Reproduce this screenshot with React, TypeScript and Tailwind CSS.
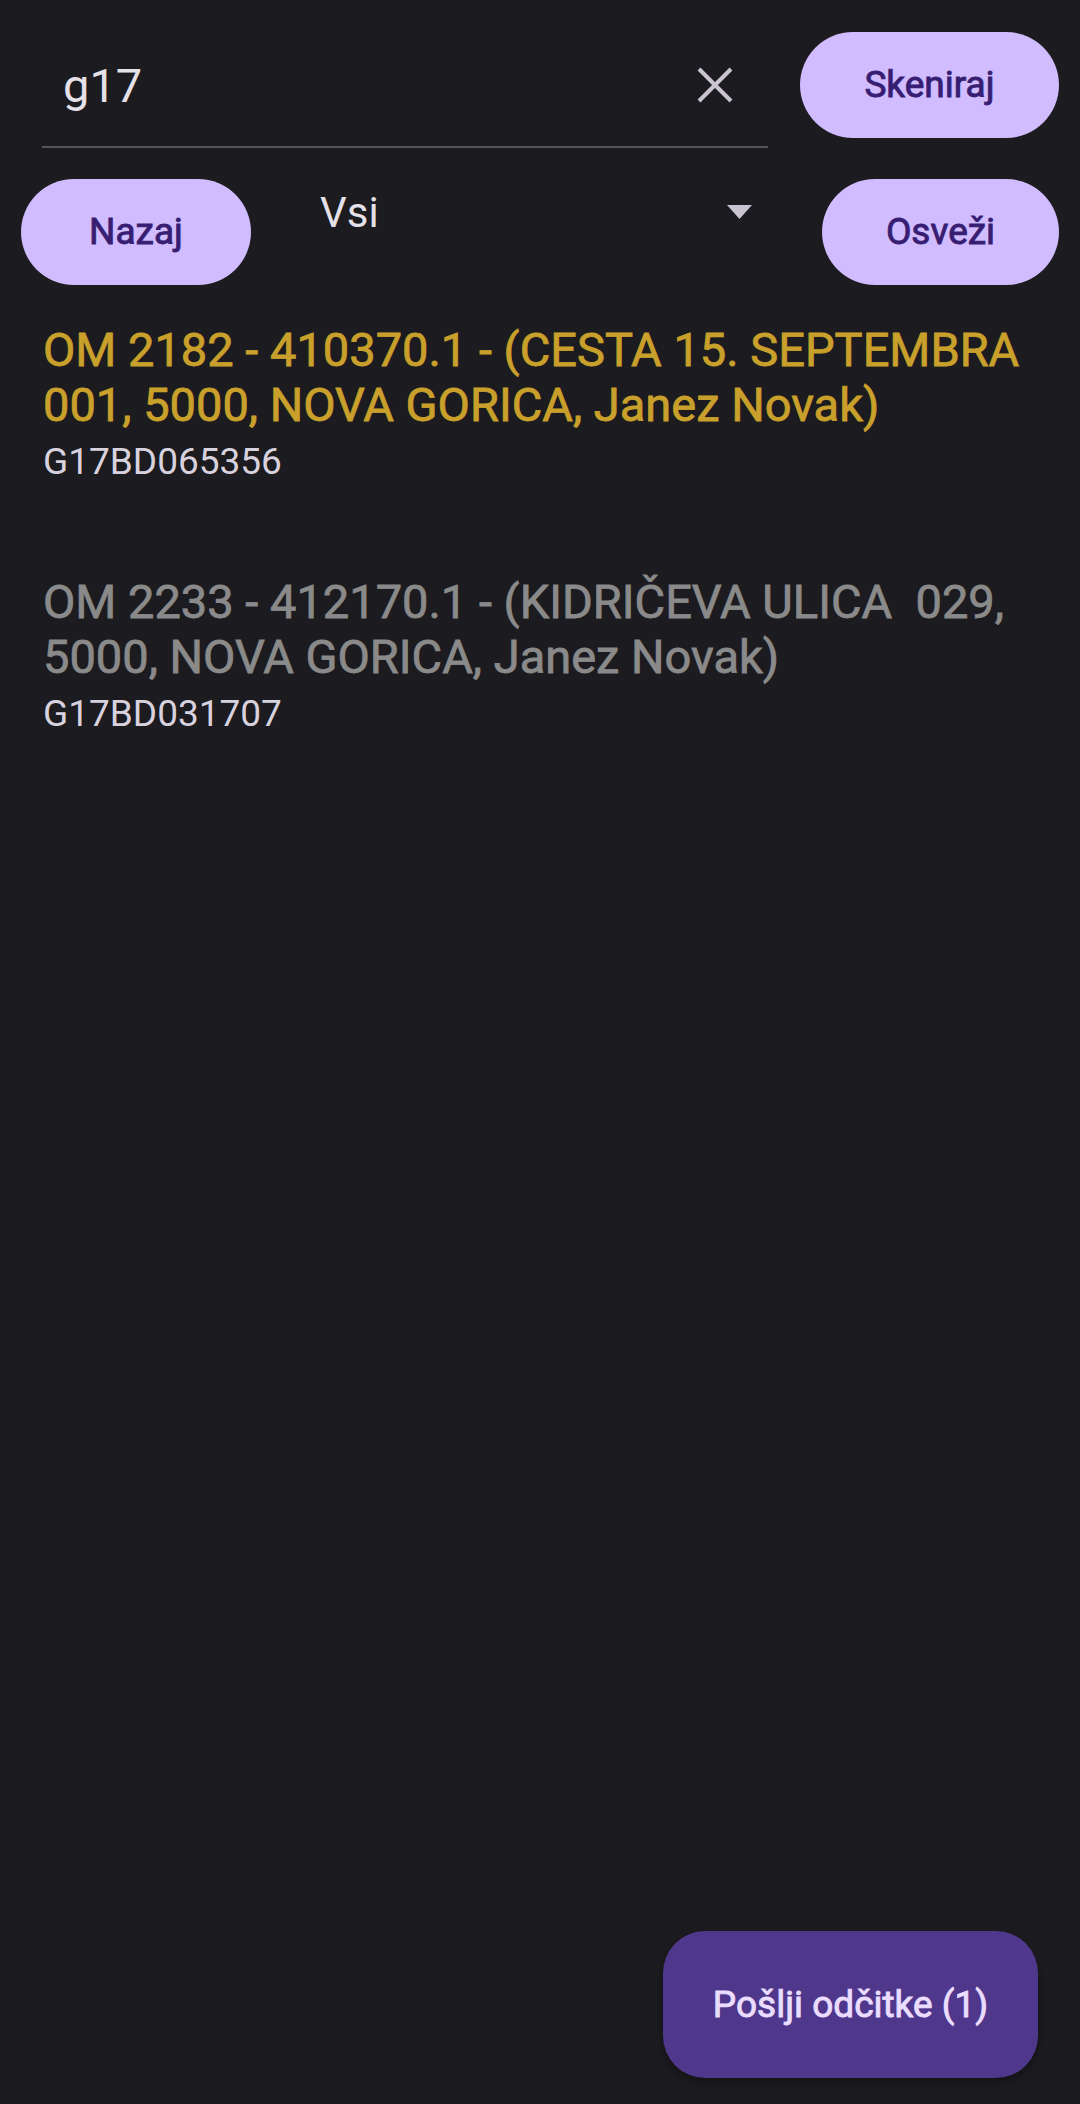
import { useState } from 'react'

const items = [
  {
    title: 'OM 2182 - 410370.1 - (CESTA 15. SEPTEMBRA 001, 5000, NOVA GORICA, Janez Novak)',
    code: 'G17BD065356',
    sent: true,
  },
  {
    title: 'OM 2233 - 412170.1 - (KIDRIČEVA ULICA  029, 5000, NOVA GORICA, Janez Novak)',
    code: 'G17BD031707',
    sent: false,
  },
]

// Roboto Medium ni na voljo, zato rahlo odebelimo navadno težo
const pillCls =
  'h-[106px] rounded-full bg-[#d0bcff] text-[#381e72] text-[37px] [-webkit-text-stroke:0.9px_#381e72] flex items-center justify-center shrink-0'

export default function App() {
  const [query, setQuery] = useState('g17')

  return (
    <div
      className="relative min-h-[2104px] bg-[#1c1b1f] text-[#e6e0e9]"
      style={{ fontFamily: 'Roboto, "Noto Sans", sans-serif' }}
    >
      {/* iskanje */}
      <div className="flex items-start pt-[32px] pl-[42px] pr-[21px]">
        <div className="flex-1 pb-[8px] border-b-2 border-[#57545b]">
          <div className="h-[106px] flex items-center pl-[21px] pr-[35px]">
            <input
              value={query}
              onChange={e => setQuery(e.target.value)}
              className="flex-1 min-w-0 bg-transparent outline-none text-[47px] leading-[55px] text-[#e6e0e9]"
            />
            <button onClick={() => setQuery('')} className="w-[36px] h-[36px] flex items-center justify-center">
              <svg width="36" height="36" viewBox="0 0 36 36">
                <path d="M2 2 L34 34 M34 2 L2 34" stroke="#cac4d0" strokeWidth="4" />
              </svg>
            </button>
          </div>
        </div>
        <button className={`${pillCls} w-[259px] ml-[32px]`}>Skeniraj</button>
      </div>

      {/* filtri */}
      <div className="flex items-start mt-[31px] px-[21px]">
        <button className={`${pillCls} w-[230px]`}>Nazaj</button>
        <div className="flex-1 h-[66px] flex items-center justify-between pl-[69px] pr-[70px]">
          <span className="text-[42px] leading-[49px] text-[#e6e0e9]">Vsi</span>
          <svg width="25" height="14" viewBox="0 0 25 14">
            <path d="M0 0 L25 0 L12.5 14 Z" fill="#cac4d0" />
          </svg>
        </div>
        <button className={`${pillCls} w-[237px]`}>Osveži</button>
      </div>

      {/* seznam */}
      <div className="px-[43px] pt-[37px] flex flex-col gap-[91px]">
        {items.map(it => (
          <div key={it.code}>
            <p
              className={`whitespace-pre-wrap text-[47px] leading-[55px] [-webkit-text-stroke:0.8px_currentColor] ${
                it.sent ? 'text-[#c9a02b]' : 'text-[#8a8a8a]'
              }`}
            >
              {it.title}
            </p>
            <p className="mt-[8px] text-[37px] leading-[43px] text-[#d8d2de]">{it.code}</p>
          </div>
        ))}
      </div>

      <button className="absolute right-[42px] bottom-[26px] w-[375px] h-[147px] rounded-[42px] bg-[#4f378b] text-[#eaddff] text-[37px] [-webkit-text-stroke:0.9px_#eaddff] shadow-[0_4px_10px_rgba(0,0,0,0.35)]">
        Pošlji odčitke (1)
      </button>
    </div>
  )
}
